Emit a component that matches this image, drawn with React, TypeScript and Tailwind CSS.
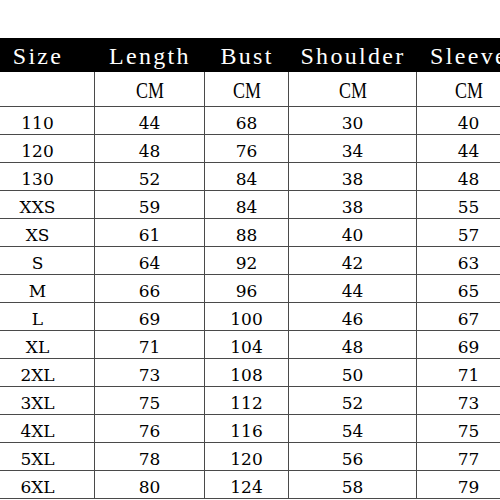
import { Fragment } from 'react'

const headers = ['Size', 'Length', 'Bust', 'Shoulder', 'Sleeve']

const rows = [
  ['110', '44', '68', '30', '40'],
  ['120', '48', '76', '34', '44'],
  ['130', '52', '84', '38', '48'],
  ['XXS', '59', '84', '38', '55'],
  ['XS', '61', '88', '40', '57'],
  ['S', '64', '92', '42', '63'],
  ['M', '66', '96', '44', '65'],
  ['L', '69', '100', '46', '67'],
  ['XL', '71', '104', '48', '69'],
  ['2XL', '73', '108', '50', '71'],
  ['3XL', '75', '112', '52', '73'],
  ['4XL', '76', '116', '54', '75'],
  ['5XL', '78', '120', '56', '77'],
  ['6XL', '80', '124', '58', '79'],
]

export default function App() {
  return (
    <div className="w-[500px] h-[500px] overflow-hidden bg-white font-[Liberation_Serif,Times_New_Roman,serif] text-black">
      <div className="h-[38px]" />
      <div className="ml-[-19px] w-[540px] grid grid-cols-[114px_110px_84px_128px_104px]">
        {headers.map((h) => (
          <div
            key={h}
            className="h-[34px] bg-black text-white text-[24px] tracking-[2.3px] flex items-center justify-center pt-[1px]"
          >
            {h}
          </div>
        ))}
        {headers.map((h, i) => (
          <div
            key={h + '-cm'}
            className="h-[35px] border-r border-b border-[#4a4a4a] flex items-center justify-center pt-[3px]"
          >
            {i > 0 && <span className="inline-block text-[23px] scale-x-[0.78] leading-none">CM</span>}
          </div>
        ))}
        {rows.map((r) => (
          <Fragment key={r[0]}>
            {r.map((c, j) => (
              <div
                key={j}
                className="h-[28px] border-r border-b border-[#4a4a4a] flex items-center justify-center font-[DejaVu_Serif,serif] text-[17px] pt-[6px]"
              >
                {c}
              </div>
            ))}
          </Fragment>
        ))}
      </div>
    </div>
  )
}
